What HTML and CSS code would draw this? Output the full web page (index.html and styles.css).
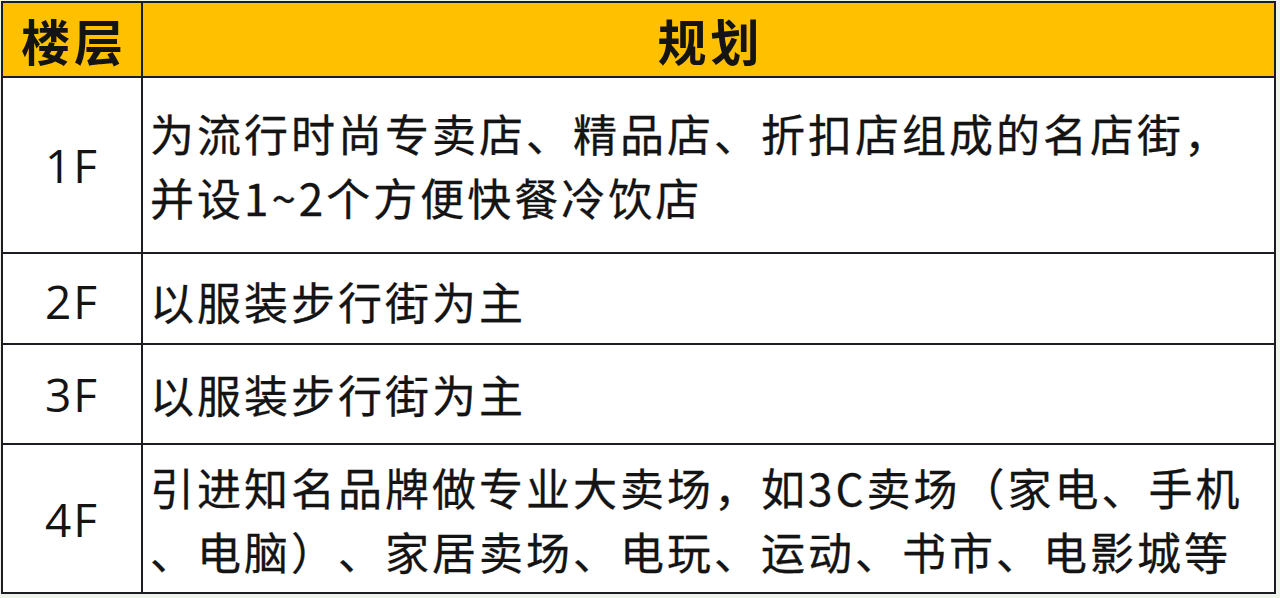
FILE: index.html
```html
<!DOCTYPE html>
<html lang="zh-CN">
<head>
<meta charset="utf-8">
<title>楼层规划</title>
<link rel="stylesheet" href="styles.css">
</head>
<body>
<div class="plan">
  <div class="cell head">楼层</div>
  <div class="cell head">规划</div>

  <div class="cell floor r1">1F</div>
  <div class="cell desc r1">为流行时尚专卖店、精品店、折扣店组成的名店街，<br>并设1~2个方便快餐冷饮店</div>

  <div class="cell floor r2">2F</div>
  <div class="cell desc r2">以服装步行街为主</div>

  <div class="cell floor r3">3F</div>
  <div class="cell desc r3">以服装步行街为主</div>

  <div class="cell floor r4">4F</div>
  <div class="cell desc r4">引进知名品牌做专业大卖场，如3C卖场（家电、手机<br>、电脑）、家居卖场、电玩、运动、书市、电影城等</div>
</div>
</body>
</html>
```

FILE: styles.css
```css
html {
  background: #eef4ea;
}
body {
  margin: 0;
  padding: 1px 0 0 1px;
  font-family: "Noto Sans CJK SC", "Noto Sans", sans-serif;
  color: #141414;
  text-spacing-trim: space-all;
}
.plan {
  width: 1275px;
  box-sizing: border-box;
  display: grid;
  grid-template-columns: 138px 1fr;
  grid-template-rows: 73px 174px 89px 98px 147px;
  gap: 2px;
  padding: 2px;
  background: #1c1c22;
}
.cell {
  background: #ffffff;
  display: flex;
  align-items: center;
}
.head {
  background: #ffc000;
  justify-content: center;
  font-weight: 700;
  font-size: 49px;
  letter-spacing: 4px;
  text-indent: 4px;
}
.floor {
  justify-content: center;
  font-family: "Open Sans", "Noto Sans", sans-serif;
  font-size: 46px;
  letter-spacing: 2px;
}
.desc {
  padding-left: 7px;
  font-size: 44px;
  letter-spacing: 3px;
  line-height: 64px;
  -webkit-text-stroke: 0.3px #141414;
}
.r2 {
  padding-top: 4px;
}
```
